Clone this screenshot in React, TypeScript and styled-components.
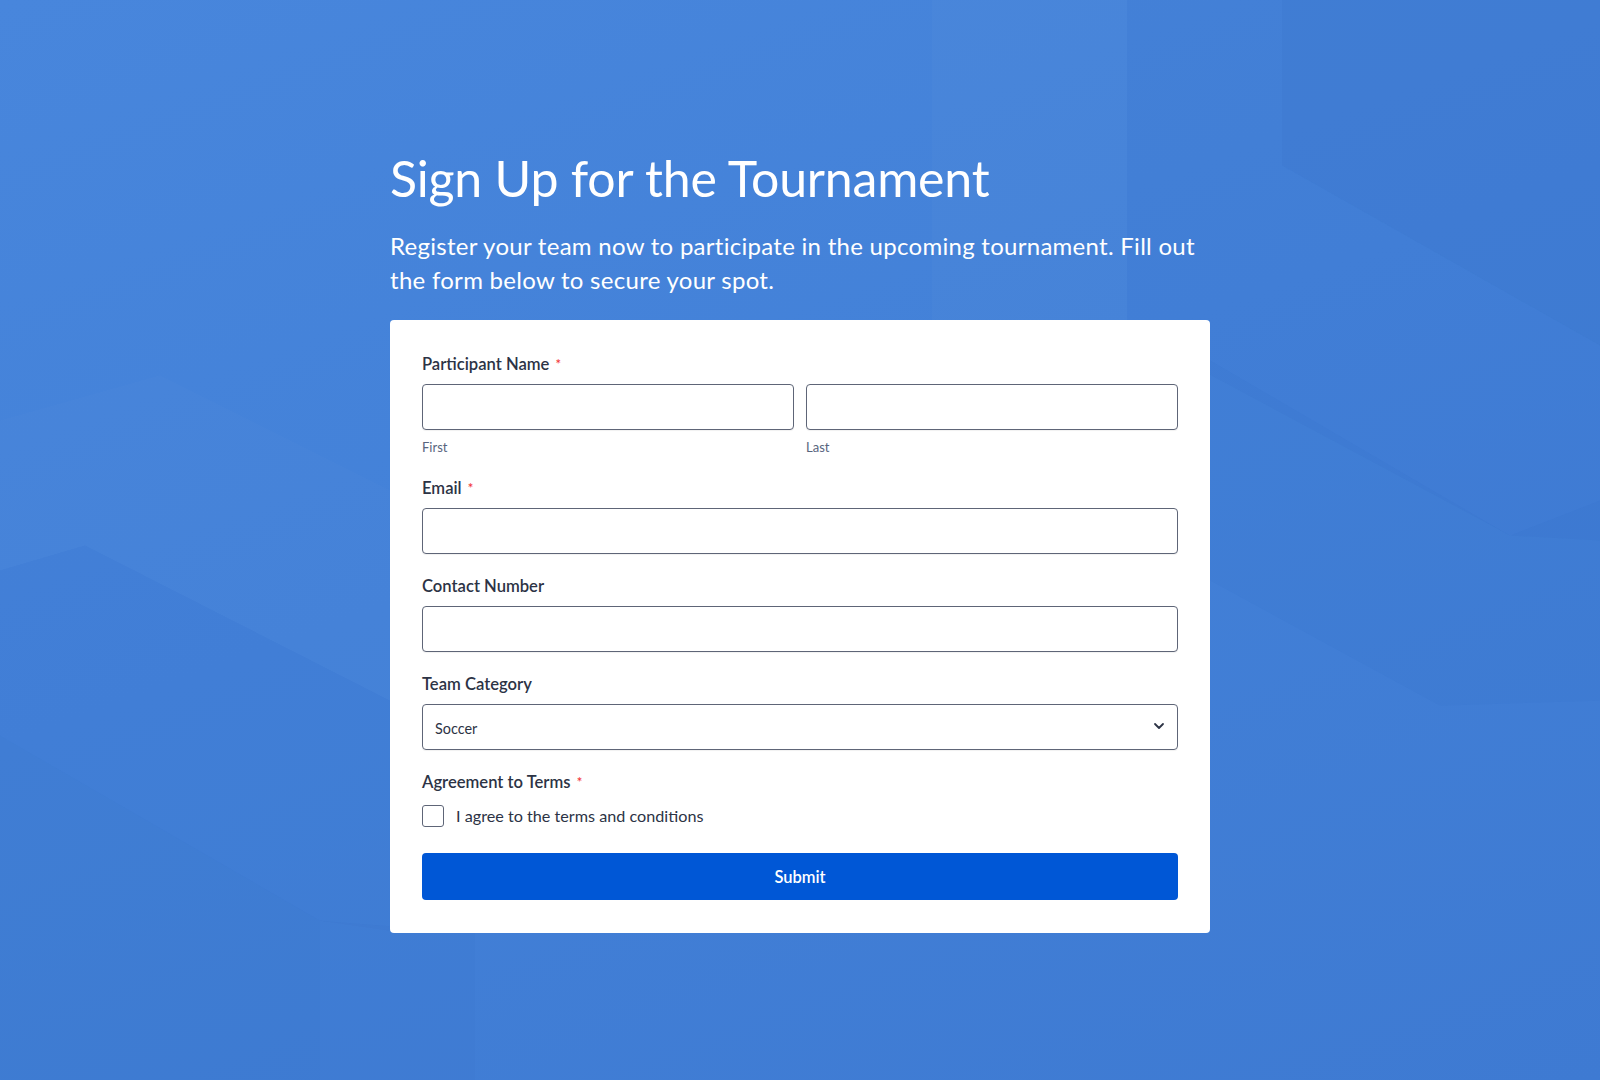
import React from 'react';
import styled, { createGlobalStyle } from 'styled-components';

const GlobalStyle = createGlobalStyle`
  * { box-sizing: border-box; }
  html, body { margin: 0; padding: 0; }
  body {
    font-family: Lato, "Noto Sans", "Liberation Sans", sans-serif;
    background: #4281d8;
  }
`;

const App = () => {
  return (
    <>
      <GlobalStyle />
      <Page>
        <Backdrop viewBox="0 0 1600 1080" preserveAspectRatio="none" aria-hidden>
          <polygon points="932,0 1127,0 1127,330 932,330" fill="#ffffff" opacity="0.02" />
          <polygon points="1127,0 1282,0 1282,165 1600,345 1600,540 1510,535 1127,330" fill="#1f4fa8" opacity="0.05" />
          <polygon points="1282,0 1600,0 1600,345 1282,165" fill="#1f4fa8" opacity="0.1" />
          <polygon points="1210,360 1510,535 1600,500 1600,700 1440,705 1210,580" fill="#1f4fa8" opacity="0.04" />
          <polygon points="0,420 160,375 390,490 390,700 85,545 0,570" fill="#ffffff" opacity="0.015" />
          <polygon points="0,570 85,545 390,700 390,930 320,920 0,735" fill="#1f4fa8" opacity="0.03" />
          <polygon points="0,735 320,920 320,1080 0,1080" fill="#1f4fa8" opacity="0.07" />
          <polygon points="320,920 475,932 475,1080 320,1080" fill="#1f4fa8" opacity="0.03" />
        </Backdrop>
        <Wrapper>
          <Title>Sign Up for the Tournament</Title>
          <Intro>
            Register your team now to participate in the upcoming tournament. Fill out the form below to
            secure your spot.
          </Intro>
          <Card>
            <Field>
              <Label>
                Participant Name <Required>*</Required>
              </Label>
              <NameRow>
                <SubField>
                  <TextInput type="text" />
                  <SubLabel>First</SubLabel>
                </SubField>
                <SubField>
                  <TextInput type="text" />
                  <SubLabel>Last</SubLabel>
                </SubField>
              </NameRow>
            </Field>

            <Field>
              <Label>
                Email <Required>*</Required>
              </Label>
              <TextInput type="email" />
            </Field>

            <Field>
              <Label>Contact Number</Label>
              <TextInput type="tel" />
            </Field>

            <Field>
              <Label>Team Category</Label>
              <SelectBox>
                <SelectValue>Soccer</SelectValue>
                <svg width="12" height="8" viewBox="0 0 12 8" fill="none">
                  <path d="M2 2l4 4 4-4" stroke="#2c3345" strokeWidth="1.8" strokeLinecap="round" strokeLinejoin="round" />
                </svg>
              </SelectBox>
            </Field>

            <Field>
              <Label>
                Agreement to Terms <Required>*</Required>
              </Label>
              <CheckRow>
                <CheckBox type="checkbox" />
                <CheckText>I agree to the terms and conditions</CheckText>
              </CheckRow>
            </Field>

            <SubmitButton type="button">Submit</SubmitButton>
          </Card>
        </Wrapper>
      </Page>
    </>
  );
};

export default App;

const Page = styled.main`
  position: relative;
  min-height: 100vh;
  overflow: hidden;
  background: linear-gradient(160deg, #4886dc 0%, #4381d8 45%, #3e7ad2 100%);
  padding-top: 146px;
  padding-bottom: 148px;
`;

const Backdrop = styled.svg`
  position: absolute;
  inset: 0;
  width: 100%;
  height: 100%;
  pointer-events: none;
`;

const Wrapper = styled.div`
  position: relative;
  width: 820px;
  margin: 0 auto;
`;

const Title = styled.h1`
  margin: 0;
  color: #fff;
  font-size: 50px;
  font-weight: 400;
  line-height: 64px;
  letter-spacing: -0.2px;
`;

const Intro = styled.p`
  margin: 19px 0 23px;
  color: #fff;
  font-size: 24px;
  font-weight: 400;
  line-height: 34px;
  letter-spacing: 0.28px;
`;

const Card = styled.form`
  display: flex;
  flex-direction: column;
  gap: 20px;
  background: #fff;
  border-radius: 4px;
  padding: 32px 32px 33px;
`;

const Field = styled.div`
  display: flex;
  flex-direction: column;
`;

const Label = styled.label`
  display: block;
  margin-bottom: 8px;
  color: #2c3345;
  font-size: 16.6px;
  font-weight: 600;
  line-height: 24px;
`;

const Required = styled.span`
  color: #f23a3c;
  font-size: 13px;
  margin-left: 2px;
  vertical-align: 1px;
`;

const NameRow = styled.div`
  display: grid;
  grid-template-columns: 1fr 1fr;
  gap: 12px;
`;

const SubField = styled.div`
  display: flex;
  flex-direction: column;
`;

const SubLabel = styled.span`
  margin-top: 8px;
  color: #57647e;
  font-size: 13px;
  line-height: 18px;
`;

const TextInput = styled.input`
  width: 100%;
  height: 46px;
  padding: 0 12px;
  border: 1px solid #5e6577;
  border-radius: 4px;
  background: #fff;
  font-family: inherit;
  font-size: 15px;
  color: #2c3345;
  box-shadow: 0 1px 1px rgba(0, 0, 0, 0.06);
  outline: none;
`;

const SelectBox = styled.div`
  display: flex;
  align-items: center;
  justify-content: space-between;
  height: 46px;
  padding: 0 12px 2px 12px;
  border: 1px solid #5e6577;
  border-radius: 4px;
  box-shadow: 0 1px 1px rgba(0, 0, 0, 0.06);
`;

const SelectValue = styled.span`
  color: #2c3345;
  font-size: 14.4px;
  padding-top: 4px;
`;

const CheckRow = styled.div`
  display: flex;
  align-items: center;
  gap: 12px;
  height: 28px;
`;

const CheckBox = styled.input`
  appearance: none;
  width: 22px;
  height: 22px;
  margin: 0;
  border: 1px solid #5e6577;
  border-radius: 3px;
  background: #fff;
`;

const CheckText = styled.span`
  color: #2c3345;
  font-size: 16.2px;
  line-height: 24px;
`;

const SubmitButton = styled.button`
  height: 47px;
  margin-top: 3px;
  border: none;
  border-radius: 4px;
  background: #0057d6;
  color: #fff;
  font-family: inherit;
  font-size: 16.5px;
  font-weight: 600;
  cursor: pointer;
`;
